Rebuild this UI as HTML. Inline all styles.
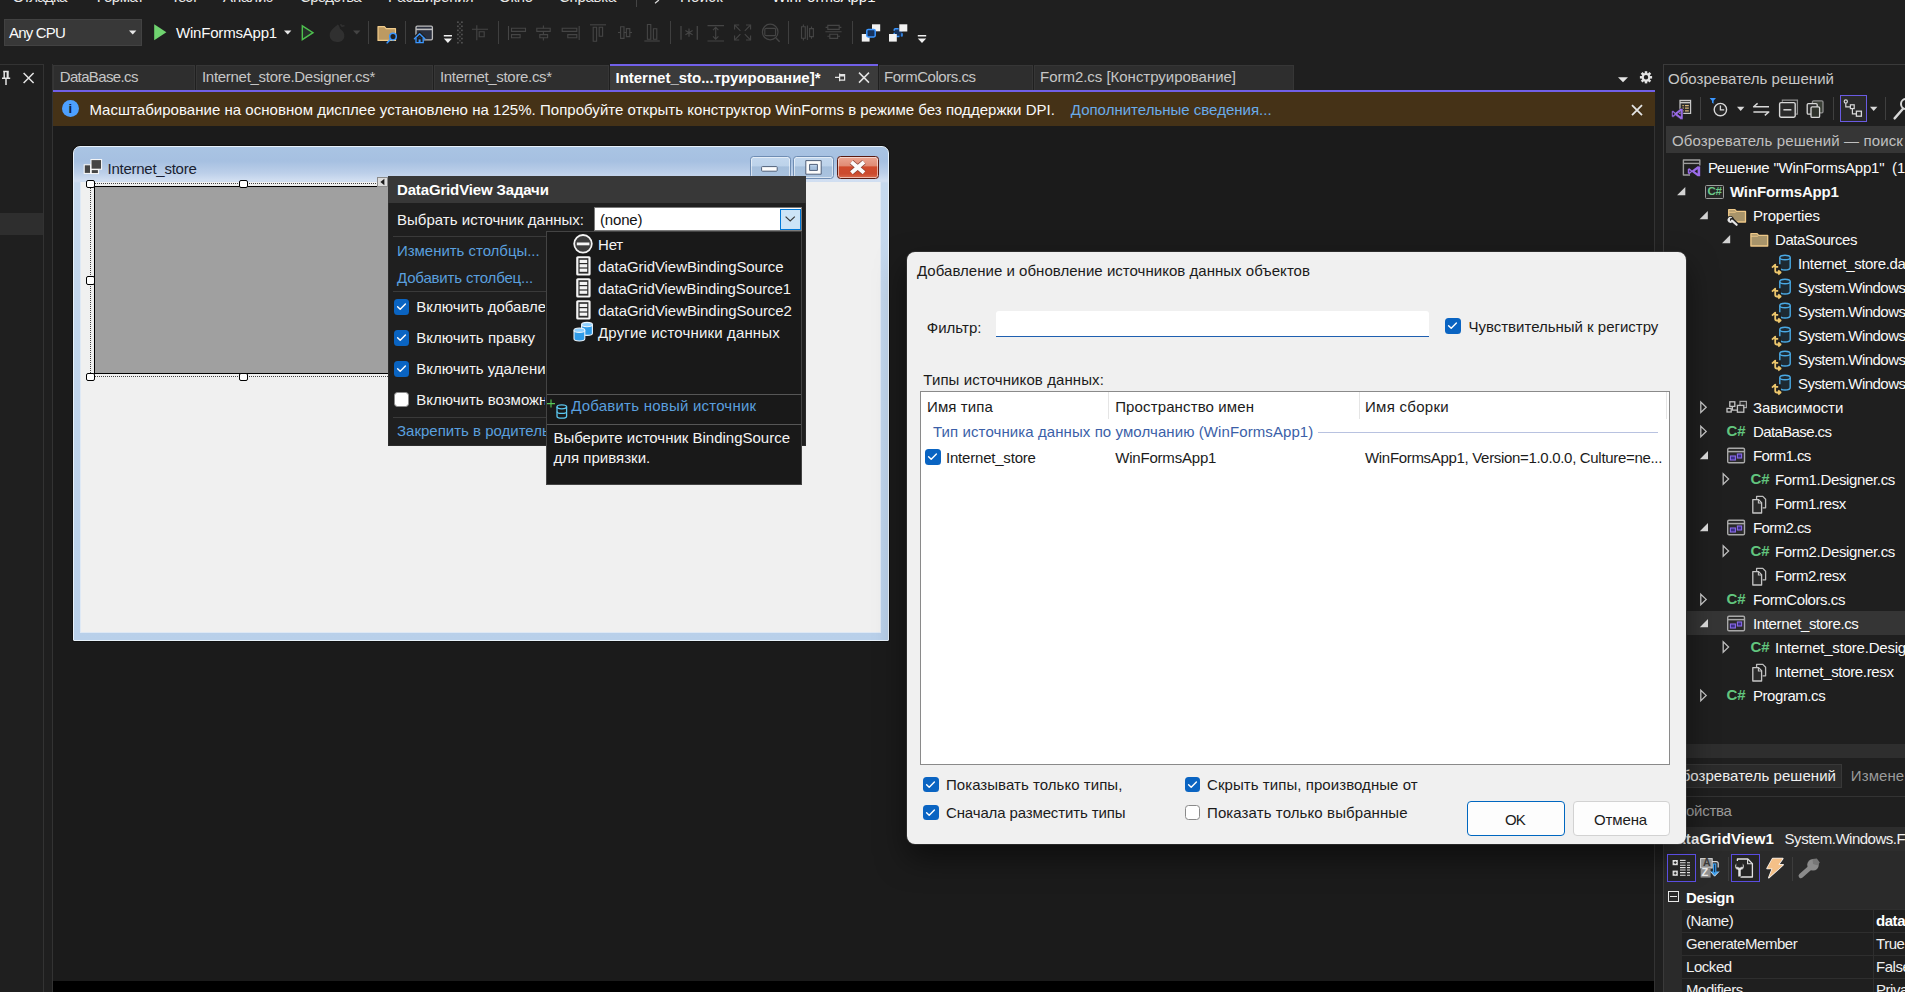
<!DOCTYPE html>
<html lang="ru"><head><meta charset="utf-8"><title>WinFormsApp1</title>
<style>
html,body{margin:0;padding:0;}
body{width:1905px;height:992px;overflow:hidden;background:#1f1f1f;position:relative;font-family:"Liberation Sans", sans-serif;font-size:15px;}
.a{position:absolute;box-sizing:border-box;}
.t{white-space:nowrap;}
svg{overflow:visible;}
</style></head>
<body>
<div class="a t" id="t1" style="left:12.6px;top:-13.2px;font-size:15px;color:#e8e8e8;line-height:20.0px;letter-spacing:-0.742px;"><span>Отладка</span></div>
<div class="a t" id="t2" style="left:93px;top:-13.2px;font-size:15px;color:#e8e8e8;line-height:20.0px;letter-spacing:-0.449px;"><span>Формат</span></div>
<div class="a t" id="t3" style="left:171px;top:-13.2px;font-size:15px;color:#e8e8e8;line-height:20.0px;letter-spacing:-1.200px;"><span>Тест</span></div>
<div class="a t" id="t4" style="left:223px;top:-13.2px;font-size:15px;color:#e8e8e8;line-height:20.0px;letter-spacing:-0.107px;"><span>Анализ</span></div>
<div class="a t" id="t5" style="left:300px;top:-13.2px;font-size:15px;color:#e8e8e8;line-height:20.0px;letter-spacing:-0.682px;"><span>Средства</span></div>
<div class="a t" id="t6" style="left:388px;top:-13.2px;font-size:15px;color:#e8e8e8;line-height:20.0px;letter-spacing:-0.173px;"><span>Расширения</span></div>
<div class="a t" id="t7" style="left:499px;top:-13.2px;font-size:15px;color:#e8e8e8;line-height:20.0px;letter-spacing:-0.215px;"><span>Окно</span></div>
<div class="a t" id="t8" style="left:559px;top:-13.2px;font-size:15px;color:#e8e8e8;line-height:20.0px;letter-spacing:-0.263px;"><span>Справка</span></div>
<div class="a t" id="t9" style="left:680px;top:-13.2px;font-size:15px;color:#e8e8e8;line-height:20.0px;letter-spacing:0.284px;"><span>Поиск</span></div>
<div class="a t" id="t10" style="left:772px;top:-13.2px;font-size:15px;color:#f4f4f4;line-height:20.0px;letter-spacing:0.012px;"><span>WinFormsApp1</span></div>
<svg class="a" style="left:0px;top:0px;" width="1" height="1" viewBox="0 0 1 1"><path d="M655 -2l3.4 2.6-3.4 2.6" fill="none" stroke="#ddd" stroke-width="1.2"/></svg>
<div class="a " style="left:636px;top:-5px;width:1px;height:12px;background:#444;"></div>
<div class="a " style="left:4px;top:19px;width:138px;height:27px;background:#383838;border:1px solid #424242;"></div>
<div class="a t" id="t11" style="left:9px;top:22.6px;font-size:15px;color:#fafafa;line-height:20.0px;letter-spacing:-0.812px;"><span>Any CPU</span></div>
<div class="a t" id="t12" style="left:176px;top:22.6px;font-size:15px;color:#fafafa;line-height:20.0px;letter-spacing:-0.197px;"><span>WinFormsApp1</span></div>
<div class="a " style="left:0px;top:64px;width:44px;height:928px;background:#1f1f1f;border-top:1px solid #333;border-right:1px solid #333;"></div>
<div class="a " style="left:0px;top:213px;width:43px;height:22px;background:#2e2e2e;"></div>
<div class="a " style="left:52.3px;top:64px;width:1px;height:928px;background:#333;"></div>
<div class="a " style="left:53px;top:92px;width:1602px;height:900px;background:#1b1b1b;"></div>
<div class="a " style="left:53px;top:65px;width:142px;height:25px;background:#2e2e2e;border:1px solid #363636;border-bottom:none;"></div>
<div class="a t" id="t13" style="left:59.7px;top:67.1px;font-size:15px;color:#c6c6c6;line-height:20.0px;letter-spacing:-0.632px;"><span>DataBase.cs</span></div>
<div class="a " style="left:196px;top:65px;width:237px;height:25px;background:#2e2e2e;border:1px solid #363636;border-bottom:none;"></div>
<div class="a t" id="t14" style="left:202px;top:67.1px;font-size:15px;color:#c6c6c6;line-height:20.0px;letter-spacing:-0.294px;"><span>Internet_store.Designer.cs*</span></div>
<div class="a " style="left:434px;top:65px;width:175px;height:25px;background:#2e2e2e;border:1px solid #363636;border-bottom:none;"></div>
<div class="a t" id="t15" style="left:440px;top:67.1px;font-size:15px;color:#c6c6c6;line-height:20.0px;letter-spacing:-0.320px;"><span>Internet_store.cs*</span></div>
<div class="a " style="left:610px;top:64px;width:268px;height:26px;background:#3b3b3b;border-top:2px solid #7160e8;"></div>
<div class="a t" id="t16" style="left:615.5px;top:67.6px;font-size:15px;color:#ffffff;line-height:20.0px;font-weight:700;letter-spacing:-0.013px;"><span>Internet_sto...труирование]*</span></div>
<div class="a " style="left:879px;top:65px;width:154px;height:25px;background:#2e2e2e;border:1px solid #363636;border-bottom:none;"></div>
<div class="a t" id="t17" style="left:884px;top:67.1px;font-size:15px;color:#c6c6c6;line-height:20.0px;letter-spacing:-0.455px;"><span>FormColors.cs</span></div>
<div class="a " style="left:1034px;top:65px;width:260px;height:25px;background:#2e2e2e;border:1px solid #363636;border-bottom:none;"></div>
<div class="a t" id="t18" style="left:1040px;top:67.1px;font-size:15px;color:#c6c6c6;line-height:20.0px;letter-spacing:-0.025px;"><span>Form2.cs [Конструирование]</span></div>
<div class="a " style="left:53px;top:89.5px;width:1602px;height:2.5px;background:#7160e8;"></div>
<div class="a " style="left:53px;top:92px;width:1602px;height:34px;background:#453217;"></div>
<div class="a " style="left:62px;top:100px;width:17px;height:17px;background:#4da0ff;border-radius:50%;"></div>
<div class="a t" id="t19" style="left:68.6px;top:99.8px;font-size:13px;color:#10233f;line-height:17.3px;font-weight:700;"><span>i</span></div>
<div class="a t" id="t20" style="left:89.4px;top:100.1px;font-size:15px;color:#fafafa;line-height:20.0px;letter-spacing:0.032px;"><span>Масштабирование на основном дисплее установлено на 125%. Попробуйте открыть конструктор WinForms в режиме без поддержки DPI.</span></div>
<div class="a t" id="t21" style="left:1070.8px;top:100.1px;font-size:15px;color:#6aacea;line-height:20.0px;letter-spacing:0.007px;"><span>Дополнительные сведения...</span></div>
<div class="a " style="left:53px;top:981px;width:1602px;height:11px;background:#000;"></div>
<div class="a " style="left:73px;top:146px;width:816px;height:495px;border-radius:7px 7px 1px 1px;background:linear-gradient(#a9c4e3 0,#a6c0e1 14px,#bccfe9 26px,#d3e0f2 34px,#c6d9ee 36px,#b9d0ea 100%);border:1px solid #e8f2fb;box-shadow:0 0 0 1px rgba(0,0,0,.35);"></div>
<div class="a " style="left:80.3px;top:182px;width:800.7px;height:451px;background:#f0f0f0;border:1px solid #dfe9f5;border-top:none;"></div>
<div class="a t" id="t22" style="left:107.5px;top:159.1px;font-size:15px;color:#1a1f33;line-height:20.0px;letter-spacing:-0.254px;"><span>Internet_store</span></div>
<div class="a " style="left:93.5px;top:186px;width:300px;height:187.5px;background:#a0a0a0;border:1px solid #000;"></div>
<div class="a " style="left:90px;top:183px;width:300px;height:194px;border:1px dotted #444;"></div>
<div class="a " style="left:86.2px;top:179.7px;width:8.6px;height:8.6px;background:#fff;border:1px solid #000;border-radius:2px;"></div>
<div class="a " style="left:239.0px;top:179.7px;width:8.6px;height:8.6px;background:#fff;border:1px solid #000;border-radius:2px;"></div>
<div class="a " style="left:86.2px;top:276.4px;width:8.6px;height:8.6px;background:#fff;border:1px solid #000;border-radius:2px;"></div>
<div class="a " style="left:86.2px;top:372.5px;width:8.6px;height:8.6px;background:#fff;border:1px solid #000;border-radius:2px;"></div>
<div class="a " style="left:239.0px;top:372.5px;width:8.6px;height:8.6px;background:#fff;border:1px solid #000;border-radius:2px;"></div>
<svg class="a" style="left:0px;top:0px;" width="1" height="1" viewBox="0 0 1 1"><rect x="91" y="159.6" width="10.6" height="9.6" fill="#454545" stroke="#fff" stroke-width="1"/><rect x="84.2" y="164.8" width="6.4" height="8.6" fill="#454545" stroke="#fff" stroke-width="1"/><rect x="91.2" y="169.6" width="7.2" height="4" fill="#454545" stroke="#fff" stroke-width="1"/></svg>
<div class="a " style="left:749.6px;top:156.4px;width:41px;height:23px;background:linear-gradient(#c3d8ee 0,#bcd2ea 44%,#a5bfdc 46%,#aac3df 100%);border:1px solid #6f8db3;border-radius:3.5px;box-shadow:inset 0 0 0 1px rgba(255,255,255,.55);"></div>
<div class="a " style="left:793.4px;top:156.4px;width:41px;height:23px;background:linear-gradient(#c3d8ee 0,#bcd2ea 44%,#a5bfdc 46%,#aac3df 100%);border:1px solid #6f8db3;border-radius:3.5px;box-shadow:inset 0 0 0 1px rgba(255,255,255,.55);"></div>
<div class="a " style="left:837.4px;top:156.4px;width:41.4px;height:23px;background:linear-gradient(#eba693 0,#e08a73 44%,#d04a2c 46%,#cc4a2e 80%,#d86a4c 100%);border:1px solid #5a1a10;border-radius:3.5px;box-shadow:inset 0 0 0 1px rgba(255,255,255,.55);"></div>
<svg class="a" style="left:0px;top:0px;" width="1" height="1" viewBox="0 0 1 1"><rect x="761.6" y="166.6" width="15.6" height="4.6" rx="0.8" fill="#fdfdfd" stroke="#50607a" stroke-width="1"/></svg>
<svg class="a" style="left:0px;top:0px;" width="1" height="1" viewBox="0 0 1 1"><path d="M805.8 160.6h15.4v13.6h-15.4zM809.6 164.4v6h7.8v-6z" fill="#fbfbfb" fill-rule="evenodd" stroke="#50607a" stroke-width="1"/></svg>
<svg class="a" style="left:0px;top:0px;" width="1" height="1" viewBox="0 0 1 1"><path d="M851.4 162l12.6 10.8M864 162l-12.6 10.8" stroke="#8a4034" stroke-width="5.4" stroke-linecap="butt"/><path d="M851.4 162l12.6 10.8M864 162l-12.6 10.8" stroke="#fbfbfb" stroke-width="3.9" stroke-linecap="butt"/></svg>
<div class="a " style="left:388px;top:176px;width:417.5px;height:270px;background:#1f1f1f;border:1px solid #2c2c2c;"></div>
<div class="a " style="left:388px;top:176px;width:417.5px;height:26.5px;background:#383838;"></div>
<div class="a t" id="t23" style="left:397px;top:179.8px;font-size:15px;color:#fff;line-height:20.0px;font-weight:700;letter-spacing:-0.152px;"><span>DataGridView Задачи</span></div>
<div class="a t" id="t24" style="left:397px;top:209.9px;font-size:15px;color:#f4f4f4;line-height:20.0px;letter-spacing:0.021px;"><span>Выбрать источник данных:</span></div>
<div class="a " style="left:594px;top:207px;width:208px;height:24px;background:#fff;border:1px solid #7a7a7a;"></div>
<div class="a t" id="t25" style="left:600px;top:209.6px;font-size:15px;color:#111;line-height:20.0px;letter-spacing:-0.177px;"><span>(none)</span></div>
<div class="a " style="left:780px;top:208.5px;width:20.5px;height:21px;background:#cce4f7;border:1px solid #0078d7;"></div>
<div class="a " style="left:392.5px;top:236px;width:409px;height:1px;background:#3a3a3a;"></div>
<div class="a t" id="t26" style="left:397px;top:240.8px;font-size:15px;color:#5a9fde;line-height:20.0px;letter-spacing:-0.035px;"><span>Изменить столбцы...</span></div>
<div class="a t" id="t27" style="left:397px;top:268.0px;font-size:15px;color:#5a9fde;line-height:20.0px;letter-spacing:-0.174px;"><span>Добавить столбец...</span></div>
<div class="a " style="left:392.5px;top:290.5px;width:409px;height:1px;background:#3a3a3a;"></div>
<div class="a " style="left:393.6px;top:299.29999999999995px;width:15.5px;height:15.5px;background:#0a64c2;border-radius:3.5px;"><svg width="15" height="15" viewBox="0 0 15 15" style="position:absolute;left:0;top:0"><path d="M3.6 7.7l2.6 2.6 5.2-5.4" fill="none" stroke="#fff" stroke-width="1.4" stroke-linecap="round" stroke-linejoin="round"/></svg></div>
<div class="a t" id="t28" style="left:416.3px;top:297.0px;font-size:15px;color:#f4f4f4;line-height:20.0px;width:129.2px;overflow:hidden;"><span>Включить добавление</span></div>
<div class="a " style="left:393.6px;top:330.09999999999997px;width:15.5px;height:15.5px;background:#0a64c2;border-radius:3.5px;"><svg width="15" height="15" viewBox="0 0 15 15" style="position:absolute;left:0;top:0"><path d="M3.6 7.7l2.6 2.6 5.2-5.4" fill="none" stroke="#fff" stroke-width="1.4" stroke-linecap="round" stroke-linejoin="round"/></svg></div>
<div class="a t" id="t29" style="left:416.3px;top:327.8px;font-size:15px;color:#f4f4f4;line-height:20.0px;width:129.2px;overflow:hidden;letter-spacing:0.015px;"><span>Включить правку</span></div>
<div class="a " style="left:393.6px;top:361.0px;width:15.5px;height:15.5px;background:#0a64c2;border-radius:3.5px;"><svg width="15" height="15" viewBox="0 0 15 15" style="position:absolute;left:0;top:0"><path d="M3.6 7.7l2.6 2.6 5.2-5.4" fill="none" stroke="#fff" stroke-width="1.4" stroke-linecap="round" stroke-linejoin="round"/></svg></div>
<div class="a t" id="t30" style="left:416.3px;top:358.7px;font-size:15px;color:#f4f4f4;line-height:20.0px;width:129.2px;overflow:hidden;"><span>Включить удаление</span></div>
<div class="a " style="left:393.6px;top:391.79999999999995px;width:15.5px;height:15.5px;background:#fff;border-radius:3.5px;border:1px solid #8a8a8a;"></div>
<div class="a t" id="t31" style="left:416.3px;top:389.5px;font-size:15px;color:#f4f4f4;line-height:20.0px;width:129.2px;overflow:hidden;"><span>Включить возможность</span></div>
<div class="a " style="left:392.5px;top:416.5px;width:409px;height:1px;background:#3a3a3a;"></div>
<div class="a t" id="t32" style="left:397px;top:421.1px;font-size:15px;color:#5a9fde;line-height:20.0px;width:148.5px;overflow:hidden;"><span>Закрепить в родительском контейнере</span></div>
<div class="a " style="left:545.5px;top:230.5px;width:256.5px;height:254px;background:#191919;border:1px solid #444;"></div>
<div class="a t" id="t33" style="left:598px;top:234.6px;font-size:15px;color:#f4f4f4;line-height:20.0px;letter-spacing:-0.182px;"><span>Нет</span></div>
<div class="a t" id="t34" style="left:598px;top:256.7px;font-size:15px;color:#f4f4f4;line-height:20.0px;letter-spacing:-0.074px;"><span>dataGridViewBindingSource</span></div>
<div class="a t" id="t35" style="left:598px;top:278.9px;font-size:15px;color:#f4f4f4;line-height:20.0px;letter-spacing:-0.103px;"><span>dataGridViewBindingSource1</span></div>
<div class="a t" id="t36" style="left:598px;top:300.6px;font-size:15px;color:#f4f4f4;line-height:20.0px;letter-spacing:-0.073px;"><span>dataGridViewBindingSource2</span></div>
<div class="a t" id="t37" style="left:598px;top:323.1px;font-size:15px;color:#f4f4f4;line-height:20.0px;letter-spacing:0.155px;"><span>Другие источники данных</span></div>
<div class="a " style="left:546.5px;top:394px;width:254.5px;height:1px;background:#565656;"></div>
<div class="a t" id="t38" style="left:571.2px;top:396.1px;font-size:15px;color:#5a9fde;line-height:20.0px;letter-spacing:0.221px;"><span>Добавить новый источник</span></div>
<div class="a " style="left:546.5px;top:424px;width:254.5px;height:1px;background:#565656;"></div>
<div class="a t" id="t39" style="left:553.4px;top:428.4px;font-size:15px;color:#f4f4f4;line-height:20.0px;letter-spacing:-0.008px;"><span>Выберите источник BindingSource</span></div>
<div class="a t" id="t40" style="left:553.4px;top:447.8px;font-size:15px;color:#f4f4f4;line-height:20.0px;letter-spacing:0.026px;"><span>для привязки.</span></div>
<div class="a " style="left:1654px;top:126px;width:1px;height:866px;background:#333;"></div>
<div class="a " style="left:1662.5px;top:64px;width:243px;height:928px;background:#1f1f1f;border-left:1px solid #3a3a3a;border-top:1px solid #3a3a3a;"></div>
<div class="a t" id="t41" style="left:1668px;top:69.1px;font-size:15px;color:#c8c8c8;line-height:20.0px;letter-spacing:0.040px;"><span>Обозреватель решений</span></div>
<div class="a " style="left:1666.3px;top:126.3px;width:240px;height:26.4px;background:#363636;"></div>
<div class="a t" id="t42" style="left:1672px;top:130.6px;font-size:15px;color:#c0c0c0;line-height:20.0px;letter-spacing:0.127px;"><span>Обозреватель решений — поиск</span></div>
<div class="a " style="left:1686.5px;top:611px;width:219px;height:24px;background:#353535;"></div>
<div class="a t" id="t43" style="left:1708px;top:157.6px;font-size:15px;color:#fafafa;line-height:20.0px;letter-spacing:-0.228px;"><span>Решение &quot;WinFormsApp1&quot;  (1</span></div>
<div class="a t" id="t44" style="left:1730px;top:181.6px;font-size:15px;color:#fafafa;line-height:20.0px;font-weight:700;letter-spacing:-0.159px;"><span>WinFormsApp1</span></div>
<div class="a t" id="t45" style="left:1753px;top:205.6px;font-size:15px;color:#fafafa;line-height:20.0px;letter-spacing:-0.158px;"><span>Properties</span></div>
<div class="a t" id="t46" style="left:1775px;top:229.6px;font-size:15px;color:#fafafa;line-height:20.0px;letter-spacing:-0.429px;"><span>DataSources</span></div>
<div class="a t" id="t47" style="left:1798px;top:253.6px;font-size:15px;color:#fafafa;line-height:20.0px;letter-spacing:-0.342px;"><span><span class="m">Internet_store.da</span>tasource</span></div>
<div class="a t" id="t48" style="left:1798px;top:277.6px;font-size:15px;color:#fafafa;line-height:20.0px;letter-spacing:-0.545px;"><span><span class="m">System.Windows</span>.Forms</span></div>
<div class="a t" id="t49" style="left:1798px;top:301.6px;font-size:15px;color:#fafafa;line-height:20.0px;letter-spacing:-0.545px;"><span><span class="m">System.Windows</span>.Forms</span></div>
<div class="a t" id="t50" style="left:1798px;top:325.6px;font-size:15px;color:#fafafa;line-height:20.0px;letter-spacing:-0.545px;"><span><span class="m">System.Windows</span>.Forms</span></div>
<div class="a t" id="t51" style="left:1798px;top:349.6px;font-size:15px;color:#fafafa;line-height:20.0px;letter-spacing:-0.545px;"><span><span class="m">System.Windows</span>.Forms</span></div>
<div class="a t" id="t52" style="left:1798px;top:373.6px;font-size:15px;color:#fafafa;line-height:20.0px;letter-spacing:-0.545px;"><span><span class="m">System.Windows</span>.Forms</span></div>
<div class="a t" id="t53" style="left:1753px;top:397.6px;font-size:15px;color:#fafafa;line-height:20.0px;letter-spacing:-0.077px;"><span>Зависимости</span></div>
<div class="a t" id="t54" style="left:1753px;top:421.6px;font-size:15px;color:#fafafa;line-height:20.0px;letter-spacing:-0.613px;"><span>DataBase.cs</span></div>
<div class="a t" id="t55" style="left:1753px;top:445.6px;font-size:15px;color:#fafafa;line-height:20.0px;letter-spacing:-0.602px;"><span>Form1.cs</span></div>
<div class="a t" id="t56" style="left:1775px;top:469.6px;font-size:15px;color:#fafafa;line-height:20.0px;letter-spacing:-0.346px;"><span>Form1.Designer.cs</span></div>
<div class="a t" id="t57" style="left:1775px;top:493.6px;font-size:15px;color:#fafafa;line-height:20.0px;letter-spacing:-0.524px;"><span>Form1.resx</span></div>
<div class="a t" id="t58" style="left:1753px;top:517.6px;font-size:15px;color:#fafafa;line-height:20.0px;letter-spacing:-0.602px;"><span>Form2.cs</span></div>
<div class="a t" id="t59" style="left:1775px;top:541.6px;font-size:15px;color:#fafafa;line-height:20.0px;letter-spacing:-0.346px;"><span>Form2.Designer.cs</span></div>
<div class="a t" id="t60" style="left:1775px;top:565.6px;font-size:15px;color:#fafafa;line-height:20.0px;letter-spacing:-0.524px;"><span>Form2.resx</span></div>
<div class="a t" id="t61" style="left:1753px;top:589.6px;font-size:15px;color:#fafafa;line-height:20.0px;letter-spacing:-0.424px;"><span>FormColors.cs</span></div>
<div class="a t" id="t62" style="left:1753px;top:613.6px;font-size:15px;color:#fafafa;line-height:20.0px;letter-spacing:-0.367px;"><span>Internet_store.cs</span></div>
<div class="a t" id="t63" style="left:1775px;top:637.6px;font-size:15px;color:#fafafa;line-height:20.0px;letter-spacing:-0.204px;"><span><span class="m">Internet_store.Desig</span>ner.cs</span></div>
<div class="a t" id="t64" style="left:1775px;top:661.6px;font-size:15px;color:#fafafa;line-height:20.0px;letter-spacing:-0.335px;"><span>Internet_store.resx</span></div>
<div class="a t" id="t65" style="left:1753px;top:685.6px;font-size:15px;color:#fafafa;line-height:20.0px;letter-spacing:-0.449px;"><span>Program.cs</span></div>
<div class="a " style="left:1663.5px;top:744px;width:242px;height:13.5px;background:#2e2e2e;"></div>
<div class="a " style="left:1663.5px;top:763.5px;width:178px;height:24px;background:#2b2b2b;border:1px solid #383838;"></div>
<div class="a t" id="t66" style="left:1670px;top:766.1px;font-size:15px;color:#f0f0f0;line-height:20.0px;letter-spacing:0.040px;"><span>Обозреватель решений</span></div>
<div class="a t" id="t67" style="left:1850.8px;top:766.1px;font-size:15px;color:#9a9a9a;line-height:20.0px;letter-spacing:0.091px;"><span><span class="m">Измене</span>ния</span></div>
<div class="a " style="left:1663.5px;top:795.5px;width:242px;height:1px;background:#333;"></div>
<div class="a t" id="t68" style="left:1668px;top:801.4px;font-size:15px;color:#9a9a9a;line-height:20.0px;letter-spacing:-0.284px;"><span>Свойства</span></div>
<div class="a " style="left:1663.5px;top:826.5px;width:242px;height:166px;background:#2a2a2a;"></div>
<div class="a " style="left:1663.5px;top:826.5px;width:242px;height:24.5px;background:#2d2d2d;"></div>
<div class="a t" id="t69" style="left:1668px;top:829.1px;font-size:15px;color:#fff;line-height:20.0px;font-weight:700;letter-spacing:0.159px;"><span>dataGridView1</span></div>
<div class="a t" id="t70" style="left:1784.6px;top:829.1px;font-size:15px;color:#f0f0f0;line-height:20.0px;letter-spacing:-0.485px;"><span><span class="m">System.Windows.F</span>orms</span></div>
<div class="a t" id="t71" style="left:1686px;top:888.0px;font-size:15px;color:#fff;line-height:20.0px;font-weight:700;letter-spacing:-0.336px;"><span>Design</span></div>
<div class="a " style="left:1682px;top:909.3px;width:191.5px;height:23px;background:#1f1f1f;border:1px solid #2e2e2e;border-width:1px 1px 0 0;"></div>
<div class="a " style="left:1873.5px;top:909.3px;width:40px;height:23px;background:#1f1f1f;border-top:1px solid #2e2e2e;"></div>
<div class="a t" id="t72" style="left:1686px;top:910.9px;font-size:15px;color:#f0f0f0;line-height:20.0px;letter-spacing:-0.45px;"><span>(Name)</span></div>
<div class="a t" id="t73" style="left:1876px;top:910.9px;font-size:15px;color:#fff;line-height:20.0px;font-weight:700;letter-spacing:-0.45px;"><span>dataGridView1</span></div>
<div class="a " style="left:1682px;top:932.3px;width:191.5px;height:23px;background:#1f1f1f;border:1px solid #2e2e2e;border-width:1px 1px 0 0;"></div>
<div class="a " style="left:1873.5px;top:932.3px;width:40px;height:23px;background:#1f1f1f;border-top:1px solid #2e2e2e;"></div>
<div class="a t" id="t74" style="left:1686px;top:933.9px;font-size:15px;color:#f0f0f0;line-height:20.0px;letter-spacing:-0.45px;"><span>GenerateMember</span></div>
<div class="a t" id="t75" style="left:1876px;top:933.9px;font-size:15px;color:#f0f0f0;line-height:20.0px;letter-spacing:-0.45px;"><span>True</span></div>
<div class="a " style="left:1682px;top:955.0px;width:191.5px;height:23px;background:#1f1f1f;border:1px solid #2e2e2e;border-width:1px 1px 0 0;"></div>
<div class="a " style="left:1873.5px;top:955.0px;width:40px;height:23px;background:#1f1f1f;border-top:1px solid #2e2e2e;"></div>
<div class="a t" id="t76" style="left:1686px;top:956.6px;font-size:15px;color:#f0f0f0;line-height:20.0px;letter-spacing:-0.45px;"><span>Locked</span></div>
<div class="a t" id="t77" style="left:1876px;top:956.6px;font-size:15px;color:#f0f0f0;line-height:20.0px;letter-spacing:-0.45px;"><span>False</span></div>
<div class="a " style="left:1682px;top:978.0px;width:191.5px;height:23px;background:#1f1f1f;border:1px solid #2e2e2e;border-width:1px 1px 0 0;"></div>
<div class="a " style="left:1873.5px;top:978.0px;width:40px;height:23px;background:#1f1f1f;border-top:1px solid #2e2e2e;"></div>
<div class="a t" id="t78" style="left:1686px;top:979.6px;font-size:15px;color:#f0f0f0;line-height:20.0px;letter-spacing:-0.45px;"><span>Modifiers</span></div>
<div class="a t" id="t79" style="left:1876px;top:979.6px;font-size:15px;color:#f0f0f0;line-height:20.0px;letter-spacing:-0.45px;"><span>Private</span></div>
<div class="a " style="left:907px;top:252px;width:778.8px;height:591.5px;background:#f0f0f0;border-radius:8px;box-shadow:0 0 0 1px rgba(70,70,70,.45),0 14px 30px rgba(0,0,0,.5);"></div>
<div class="a t" id="t80" style="left:917px;top:260.9px;font-size:15px;color:#1b1b1b;line-height:20.0px;letter-spacing:0.031px;"><span>Добавление и обновление источников данных объектов</span></div>
<div class="a t" id="t81" style="left:926.7px;top:317.6px;font-size:15px;color:#1b1b1b;line-height:20.0px;letter-spacing:0.048px;"><span>Фильтр:</span></div>
<div class="a " style="left:995.5px;top:311px;width:433.5px;height:25.5px;background:#fff;border-radius:3px 3px 0 0;border-bottom:1.6px solid #1f5fb0;"></div>
<div class="a " style="left:1445.3px;top:318.3px;width:15.5px;height:15.5px;background:#0a64c2;border-radius:3.5px;"><svg width="15" height="15" viewBox="0 0 15 15" style="position:absolute;left:0;top:0"><path d="M3.6 7.7l2.6 2.6 5.2-5.4" fill="none" stroke="#fff" stroke-width="1.4" stroke-linecap="round" stroke-linejoin="round"/></svg></div>
<div class="a t" id="t82" style="left:1468.5px;top:317.1px;font-size:15px;color:#1b1b1b;line-height:20.0px;letter-spacing:-0.010px;"><span>Чувствительный к регистру</span></div>
<div class="a t" id="t83" style="left:923.3px;top:369.6px;font-size:15px;color:#1b1b1b;line-height:20.0px;letter-spacing:0.102px;"><span>Типы источников данных:</span></div>
<div class="a " style="left:919.5px;top:391px;width:750.5px;height:374px;background:#fff;border:1px solid #8a8a8a;"></div>
<div class="a t" id="t84" style="left:927px;top:397.1px;font-size:15px;color:#1b1b1b;line-height:20.0px;letter-spacing:0.111px;"><span>Имя типа</span></div>
<div class="a t" id="t85" style="left:1115.2px;top:397.1px;font-size:15px;color:#1b1b1b;line-height:20.0px;letter-spacing:0.129px;"><span>Пространство имен</span></div>
<div class="a t" id="t86" style="left:1365px;top:397.1px;font-size:15px;color:#1b1b1b;line-height:20.0px;letter-spacing:0.289px;"><span>Имя сборки</span></div>
<div class="a " style="left:1108.4px;top:392px;width:1px;height:27px;background:#e5e5e5;"></div>
<div class="a " style="left:1358.6px;top:392px;width:1px;height:27px;background:#e5e5e5;"></div>
<div class="a " style="left:1666.3px;top:392px;width:1px;height:27px;background:#e5e5e5;"></div>
<div class="a t" id="t87" style="left:933px;top:422.0px;font-size:15px;color:#3b5fa8;line-height:20.0px;letter-spacing:0.090px;"><span>Тип источника данных по умолчанию (WinFormsApp1)</span></div>
<div class="a " style="left:1318px;top:431.5px;width:340px;height:1px;background:#b8c2e0;"></div>
<div class="a " style="left:925.1px;top:449.4px;width:15.5px;height:15.5px;background:#0a64c2;border-radius:3.5px;"><svg width="15" height="15" viewBox="0 0 15 15" style="position:absolute;left:0;top:0"><path d="M3.6 7.7l2.6 2.6 5.2-5.4" fill="none" stroke="#fff" stroke-width="1.4" stroke-linecap="round" stroke-linejoin="round"/></svg></div>
<div class="a t" id="t88" style="left:946px;top:447.8px;font-size:15px;color:#1b1b1b;line-height:20.0px;letter-spacing:-0.204px;"><span>Internet_store</span></div>
<div class="a t" id="t89" style="left:1115.2px;top:447.8px;font-size:15px;color:#1b1b1b;line-height:20.0px;letter-spacing:-0.197px;"><span>WinFormsApp1</span></div>
<div class="a t" id="t90" style="left:1365px;top:447.8px;font-size:15px;color:#1b1b1b;line-height:20.0px;letter-spacing:-0.318px;"><span>WinFormsApp1, Version=1.0.0.0, Culture=ne...</span></div>
<div class="a " style="left:923.3px;top:776.8px;width:15.5px;height:15.5px;background:#0a64c2;border-radius:3.5px;"><svg width="15" height="15" viewBox="0 0 15 15" style="position:absolute;left:0;top:0"><path d="M3.6 7.7l2.6 2.6 5.2-5.4" fill="none" stroke="#fff" stroke-width="1.4" stroke-linecap="round" stroke-linejoin="round"/></svg></div>
<div class="a t" id="t91" style="left:946px;top:774.5px;font-size:15px;color:#1b1b1b;line-height:20.0px;letter-spacing:0.045px;"><span>Показывать только типы,</span></div>
<div class="a " style="left:923.3px;top:804.9px;width:15.5px;height:15.5px;background:#0a64c2;border-radius:3.5px;"><svg width="15" height="15" viewBox="0 0 15 15" style="position:absolute;left:0;top:0"><path d="M3.6 7.7l2.6 2.6 5.2-5.4" fill="none" stroke="#fff" stroke-width="1.4" stroke-linecap="round" stroke-linejoin="round"/></svg></div>
<div class="a t" id="t92" style="left:946px;top:802.8px;font-size:15px;color:#1b1b1b;line-height:20.0px;letter-spacing:-0.133px;"><span>Сначала разместить типы</span></div>
<div class="a " style="left:1184.5px;top:776.8px;width:15.5px;height:15.5px;background:#0a64c2;border-radius:3.5px;"><svg width="15" height="15" viewBox="0 0 15 15" style="position:absolute;left:0;top:0"><path d="M3.6 7.7l2.6 2.6 5.2-5.4" fill="none" stroke="#fff" stroke-width="1.4" stroke-linecap="round" stroke-linejoin="round"/></svg></div>
<div class="a t" id="t93" style="left:1207px;top:774.5px;font-size:15px;color:#1b1b1b;line-height:20.0px;letter-spacing:0.068px;"><span>Скрыть типы, производные от</span></div>
<div class="a " style="left:1184.5px;top:804.9px;width:15.5px;height:15.5px;background:#fff;border-radius:3.5px;border:1px solid #8a8a8a;"></div>
<div class="a t" id="t94" style="left:1207px;top:802.8px;font-size:15px;color:#1b1b1b;line-height:20.0px;letter-spacing:0.101px;"><span>Показать только выбранные</span></div>
<div class="a " style="left:1467.3px;top:801.3px;width:97.6px;height:35.2px;background:#fdfdfd;border:1px solid #0067c0;border-radius:4px;"></div>
<div class="a t" id="t95" style="left:1505px;top:809.6px;font-size:15px;color:#1b1b1b;line-height:20.0px;letter-spacing:-0.844px;"><span>OK</span></div>
<div class="a " style="left:1572.5px;top:801.3px;width:97.2px;height:35.2px;background:#fdfdfd;border:1px solid #d2d2d2;border-radius:4px;"></div>
<div class="a t" id="t96" style="left:1594px;top:809.6px;font-size:15px;color:#1b1b1b;line-height:20.0px;letter-spacing:-0.138px;"><span>Отмена</span></div>
<div class="a " style="left:376.6px;top:176.8px;width:11px;height:10.4px;background:#dcdcdc;border:1px solid #8a8a8a;"></div>
<svg class="a" style="left:0px;top:0px;" width="1" height="1" viewBox="0 0 1 1"><path d="M384.4 178.8v6.4l-4-3.2z" fill="#1a1a1a"/></svg>
<svg class="a" style="left:0px;top:0px;" width="1" height="1" viewBox="0 0 1 1"><path d="M785.6 216.6l4.6 4.4 4.6-4.4" fill="none" stroke="#3a3a3a" stroke-width="1.2"/></svg>
<svg class="a" style="left:0px;top:0px;" width="1" height="1" viewBox="0 0 1 1"><circle cx="583" cy="243.8" r="8.8" fill="#3c3c3c" stroke="#f4f4f4" stroke-width="1.8"/><rect x="576.8" y="242.5" width="12.6" height="2.8" fill="#f4f4f4"/></svg>
<svg class="a" style="left:0px;top:0px;" width="1" height="1" viewBox="0 0 1 1"><rect x="576.2" y="256.2" width="14.4" height="19.4" rx="1.6" fill="#f4f4f4"/><rect x="578.4" y="258.2" width="10" height="15.4" fill="#2a2a2a"/><rect x="579.6" y="259.8" width="7.6" height="3.2" fill="#f4f4f4"/><rect x="579.6" y="264.2" width="7.6" height="3.2" fill="#f4f4f4"/><rect x="579.6" y="268.6" width="7.6" height="3.2" fill="#f4f4f4"/></svg>
<svg class="a" style="left:0px;top:0px;" width="1" height="1" viewBox="0 0 1 1"><rect x="576.2" y="278.2" width="14.4" height="19.4" rx="1.6" fill="#f4f4f4"/><rect x="578.4" y="280.2" width="10" height="15.4" fill="#2a2a2a"/><rect x="579.6" y="281.8" width="7.6" height="3.2" fill="#f4f4f4"/><rect x="579.6" y="286.2" width="7.6" height="3.2" fill="#f4f4f4"/><rect x="579.6" y="290.6" width="7.6" height="3.2" fill="#f4f4f4"/></svg>
<svg class="a" style="left:0px;top:0px;" width="1" height="1" viewBox="0 0 1 1"><rect x="576.2" y="300.2" width="14.4" height="19.4" rx="1.6" fill="#f4f4f4"/><rect x="578.4" y="302.2" width="10" height="15.4" fill="#2a2a2a"/><rect x="579.6" y="303.8" width="7.6" height="3.2" fill="#f4f4f4"/><rect x="579.6" y="308.2" width="7.6" height="3.2" fill="#f4f4f4"/><rect x="579.6" y="312.6" width="7.6" height="3.2" fill="#f4f4f4"/></svg>
<svg class="a" style="left:0px;top:0px;" width="1" height="1" viewBox="0 0 1 1"><path d="M581.6 324.59999999999997v8.6c0 1.4 2.16 2.2 5.4 2.2s5.4-.8 5.4-2.2v-8.6" fill="#2f9be8" stroke="#eaf4fc" stroke-width="1.1"/><ellipse cx="587.0" cy="324.59999999999997" rx="5.4" ry="2.2" fill="#8fd0ff" stroke="#eaf4fc" stroke-width="1.1"/><path d="M574 330.2v8.6c0 1.4 2.16 2.2 5.4 2.2s5.4-.8 5.4-2.2v-8.6" fill="#2f9be8" stroke="#eaf4fc" stroke-width="1.1"/><ellipse cx="579.4" cy="330.2" rx="5.4" ry="2.2" fill="#8fd0ff" stroke="#eaf4fc" stroke-width="1.1"/></svg>
<svg class="a" style="left:0px;top:0px;" width="1" height="1" viewBox="0 0 1 1"><path d="M547 403.6h8M551 399.6v8" stroke="#58c858" stroke-width="1.1"/><path d="M557 406.8v9.4c0 1.2 2.2 2 4.8 2s4.8-.8 4.8-2v-9.4" fill="none" stroke="#5cc8f0" stroke-width="1.3"/><ellipse cx="561.8" cy="406.8" rx="4.8" ry="2" fill="none" stroke="#5cc8f0" stroke-width="1.3"/><path d="M557 411.4c0 1.2 2.2 2 4.8 2s4.8-.8 4.8-2" fill="none" stroke="#5cc8f0" stroke-width="1.1"/></svg>
<svg class="a" style="left:0px;top:0px;" width="1" height="1" viewBox="0 0 1 1"><path d="M129 30.6H136.4L132.7 34.6Z" fill="#e8e8e8"/></svg>
<svg class="a" style="left:0px;top:0px;" width="1" height="1" viewBox="0 0 1 1"><path d="M154.2 24.3V40.2L166.4 32.2Z" fill="#6fd36f"/></svg>
<svg class="a" style="left:0px;top:0px;" width="1" height="1" viewBox="0 0 1 1"><path d="M284 30.6H291.4L287.7 34.6Z" fill="#e8e8e8"/></svg>
<svg class="a" style="left:0px;top:0px;" width="1" height="1" viewBox="0 0 1 1"><path d="M302.3 25.8V39.6L313 32.7Z" fill="#26302a" stroke="#4ec04e" stroke-width="1.4" stroke-linejoin="miter"/></svg>
<svg class="a" style="left:0px;top:0px;" width="1" height="1" viewBox="0 0 1 1"><path d="M337.5 24.5c2.5 1.2 1.5 3.6 3.4 5 2.6 1.9 3.8 4.2 3.4 7.2-.5 3.4-3.6 5.5-7.3 5.3-4-.2-7-2.6-7.3-6.3-.3-3.4 1.8-5.4 3.6-7.4 1.6-1.7 3.4-2.3 4.2-3.8z" fill="#303030"/><path d="M340.5 24.2l1.6 2.2 2.4-.8" fill="none" stroke="#303030" stroke-width="1.6"/></svg>
<svg class="a" style="left:0px;top:0px;" width="1" height="1" viewBox="0 0 1 1"><path d="M353 30.6H360.4L356.7 34.6Z" fill="#444"/></svg>
<div class="a " style="left:368.0px;top:20.5px;width:1px;height:23.0px;background:#3f3f3f;"></div>
<svg class="a" style="left:0px;top:0px;" width="1" height="1" viewBox="0 0 1 1"><path d="M378 26.6h6.4l1.8 2h9.3v11.8H378z" fill="#bd9a62" stroke="#f0cb8a" stroke-width="1.2" stroke-linejoin="round"/><circle cx="393" cy="36.6" r="3.3" fill="#1f1f1f" stroke="#3a96ff" stroke-width="1.5"/><path d="M390.6 39.2l-3.4 3.6" stroke="#3a96ff" stroke-width="1.6" stroke-linecap="round"/></svg>
<div class="a " style="left:404.8px;top:20.5px;width:1px;height:23.0px;background:#3f3f3f;"></div>
<svg class="a" style="left:0px;top:0px;" width="1" height="1" viewBox="0 0 1 1"><rect x="416" y="26.2" width="16.4" height="13.6" rx="1.2" fill="#2a2f3e" stroke="#bdbdbd" stroke-width="1.3"/><path d="M416 29.4h16.4" stroke="#bdbdbd" stroke-width="1.6"/><path d="M414.4 38.6l5.2-5 5.2 5" fill="none" stroke="#1f1f1f" stroke-width="3.6"/><path d="M416 38v4.6h7.2V38" fill="#1f1f1f" stroke="#3a96ff" stroke-width="1.3"/><path d="M414.4 38.8l5.2-5 5.2 5" fill="none" stroke="#3a96ff" stroke-width="1.4" stroke-linejoin="round" stroke-linecap="round"/><rect x="418.6" y="39.4" width="2" height="3" fill="#3a96ff"/></svg>
<svg class="a" style="left:0px;top:0px;" width="1" height="1" viewBox="0 0 1 1"><path d="M443.8 34.9H452V36.4H443.8Z M443.8 38.4H452L447.9 43Z" fill="#f0f0f0"/></svg>
<svg class="a" style="left:0px;top:0px;" width="1" height="1" viewBox="0 0 1 1"><rect x="457" y="21.4" width="1.8" height="1.6" fill="#505050"/><rect x="461" y="21.4" width="1.8" height="1.6" fill="#505050"/><rect x="459" y="23.45" width="1.8" height="1.6" fill="#444"/><rect x="457" y="25.5" width="1.8" height="1.6" fill="#505050"/><rect x="461" y="25.5" width="1.8" height="1.6" fill="#505050"/><rect x="459" y="27.549999999999997" width="1.8" height="1.6" fill="#444"/><rect x="457" y="29.599999999999998" width="1.8" height="1.6" fill="#505050"/><rect x="461" y="29.599999999999998" width="1.8" height="1.6" fill="#505050"/><rect x="459" y="31.65" width="1.8" height="1.6" fill="#444"/><rect x="457" y="33.699999999999996" width="1.8" height="1.6" fill="#505050"/><rect x="461" y="33.699999999999996" width="1.8" height="1.6" fill="#505050"/><rect x="459" y="35.75" width="1.8" height="1.6" fill="#444"/><rect x="457" y="37.8" width="1.8" height="1.6" fill="#505050"/><rect x="461" y="37.8" width="1.8" height="1.6" fill="#505050"/><rect x="459" y="39.849999999999994" width="1.8" height="1.6" fill="#444"/><rect x="457" y="41.9" width="1.8" height="1.6" fill="#505050"/><rect x="461" y="41.9" width="1.8" height="1.6" fill="#505050"/></svg>
<svg class="a" style="left:0px;top:0px;" width="1" height="1" viewBox="0 0 1 1"><path d="M476.8 25.2V40.2M472 29.3H488" fill="none" stroke="#454545" stroke-width="1.1"/><path d="M479.2 31.8h5v5h-5z" fill="none" stroke="#454545" stroke-width="1.1"/><path d="M508.5 26V40" fill="none" stroke="#454545" stroke-width="1.1"/><path d="M511.5 28.2h14v3.2h-14zM511.5 34.6h8.6v3.2h-8.6z" fill="none" stroke="#454545" stroke-width="1.1"/><path d="M543.4 25.6V40.4" fill="none" stroke="#454545" stroke-width="1.1"/><path d="M536.8 28.2h13.4v3.2h-13.4zM539.8 34.6h7.8v3.2h-7.8z" fill="#1f1f1f" stroke="#454545" stroke-width="1.1"/><path d="M579.2 26V40" fill="none" stroke="#454545" stroke-width="1.1"/><path d="M562.2 28.2h14.6v3.2h-14.6zM567.8 34.6h9v3.2h-9z" fill="none" stroke="#454545" stroke-width="1.1"/><path d="M590 24.8H606" fill="none" stroke="#454545" stroke-width="1.1"/><path d="M593.2 27.2h3.4v14h-3.4zM599.2 27.2h3.4v9h-3.4z" fill="none" stroke="#454545" stroke-width="1.1"/><path d="M618 32.5H632" fill="none" stroke="#454545" stroke-width="1.1"/><path d="M620.6 26.8h3.4v11.6h-3.4zM626.4 28.6h3.4v8h-3.4z" fill="#1f1f1f" stroke="#454545" stroke-width="1.1"/><path d="M644.3 41H659.8" fill="none" stroke="#454545" stroke-width="1.1"/><path d="M647.4 24.5h3.4v14.8h-3.4zM653.4 28.8h3.4v10.5h-3.4z" fill="none" stroke="#454545" stroke-width="1.1"/><path d="M681 26V39.8M697.3 26V39.8" fill="none" stroke="#454545" stroke-width="1.3"/><path d="M689 28.6v8.2M685.4 30.6l7.2 4.2M692.6 30.6l-7.2 4.2" fill="none" stroke="#454545" stroke-width="1.2"/><path d="M707.5 25.6H724M707.5 41H724" fill="none" stroke="#454545" stroke-width="1.2"/><path d="M715.7 27.4V39.2M713 30.2l2.7-2.8 2.7 2.8M713 36.4l2.7 2.8 2.7-2.8" fill="none" stroke="#454545" stroke-width="1.1"/><path d="M734.6 29.6V25h4.6M746 25h4.6v4.6M750.6 35.4V40H746M739.2 40h-4.6V35.4" fill="none" stroke="#454545" stroke-width="1.1"/><path d="M735 25.4l5.4 5.4M750.2 25.4l-5.4 5.4M750.2 39.6l-5.4-5.4M735 39.6l5.4-5.4" fill="none" stroke="#454545" stroke-width="1.1"/><path d="M776 38l3.6 3.8" fill="none" stroke="#454545" stroke-width="1.4"/><circle cx="770.2" cy="32" r="7.8" fill="none" stroke="#454545" stroke-width="1.2"/><path d="M766 28.4h8.4a1.2 1.2 0 0 1 1.2 1.2v4.8a1.2 1.2 0 0 1-1.2 1.2H766a1.2 1.2 0 0 1-1.2-1.2v-4.8a1.2 1.2 0 0 1 1.2-1.2z" fill="none" stroke="#454545" stroke-width="1.1"/><path d="M801.5 26.8h3.8v11.4h-3.8zM809.6 28.6h3.8v8h-3.8z" fill="none" stroke="#454545" stroke-width="1.1"/><path d="M807.4 25.4V40M803.4 24.6v2.2M803.4 38.2v2.2M811.5 26.4v2.2M811.5 36.6v2.2" fill="none" stroke="#454545" stroke-width="1.1"/><path d="M827.8 25.4h11.4v4h-11.4zM829.8 34.2h7.8v4.2h-7.8z" fill="none" stroke="#454545" stroke-width="1.1"/><path d="M825.4 31.8H841.6M825.6 27.4h2.2M839.2 27.4h2.2M827.4 36.2h2.4M837.6 36.2h2.4" fill="none" stroke="#454545" stroke-width="1.1"/></svg>
<div class="a " style="left:497.9px;top:20.5px;width:1px;height:23.0px;background:#3f3f3f;"></div>
<div class="a " style="left:670.1px;top:20.5px;width:1px;height:23.0px;background:#3f3f3f;"></div>
<div class="a " style="left:788.0px;top:20.5px;width:1px;height:23.0px;background:#3f3f3f;"></div>
<div class="a " style="left:852.0px;top:20.5px;width:1px;height:23.0px;background:#3f3f3f;"></div>
<svg class="a" style="left:0px;top:0px;" width="1" height="1" viewBox="0 0 1 1"><rect x="872" y="24.3" width="8.2" height="7" fill="#f2f2f2"/><rect x="861.8" y="34" width="7.8" height="7.6" fill="#f2f2f2"/><rect x="866.8" y="29.4" width="8.4" height="7.6" rx="1.4" fill="#16335e" stroke="#3a96ff" stroke-width="1.5"/></svg>
<svg class="a" style="left:0px;top:0px;" width="1" height="1" viewBox="0 0 1 1"><rect x="894.2" y="28.8" width="7.8" height="7.8" rx="1.2" fill="#16335e" stroke="#3a96ff" stroke-width="1.5" stroke-dasharray="3.2 2"/><rect x="899.3" y="24.3" width="8" height="7.2" fill="#f2f2f2"/><rect x="889" y="34" width="7.8" height="7.6" fill="#f2f2f2"/></svg>
<svg class="a" style="left:0px;top:0px;" width="1" height="1" viewBox="0 0 1 1"><path d="M917.8 34.9H926.2V36.4H917.8Z M917.8 38.4H926.2L922.0 43Z" fill="#f0f0f0"/></svg>
<svg class="a" style="left:0px;top:0px;" width="1" height="1" viewBox="0 0 1 1"><path d="M3.2 71.6h5.6M4.2 71.6v6.2M7.8 71.6v6.2M2 78.2h8.2M6 78.4V85" fill="none" stroke="#e4e4e4" stroke-width="1.5"/><rect x="6.6" y="72" width="1.8" height="6" fill="#e4e4e4"/></svg>
<svg class="a" style="left:0px;top:0px;" width="1" height="1" viewBox="0 0 1 1"><path d="M23.6 73l10 10M33.6 73l-10 10" stroke="#e4e4e4" stroke-width="1.5"/></svg>
<svg class="a" style="left:0px;top:0px;" width="1" height="1" viewBox="0 0 1 1"><path d="M835 77.4h4.2M839.6 73.6v7.6M839.6 74.6h5v5.6h-5M844.6 75.8h-5" fill="none" stroke="#e4e4e4" stroke-width="1.2"/></svg>
<svg class="a" style="left:0px;top:0px;" width="1" height="1" viewBox="0 0 1 1"><path d="M859 72.6l10 10M869 72.6l-10 10" stroke="#e4e4e4" stroke-width="1.5"/></svg>
<svg class="a" style="left:0px;top:0px;" width="1" height="1" viewBox="0 0 1 1"><path d="M1632 105.2l10 10M1642 105.2l-10 10" stroke="#e4e4e4" stroke-width="1.8"/></svg>
<svg class="a" style="left:0px;top:0px;" width="1" height="1" viewBox="0 0 1 1"><path d="M1618 77.2h10l-5 5z" fill="#e4e4e4"/></svg>
<svg class="a" style="left:0px;top:0px;" width="1" height="1" viewBox="0 0 1 1"><path d="M1649.60 77.30L1652.10 77.30" stroke="#e4e4e4" stroke-width="2.5"/><path d="M1648.55 79.85L1650.31 81.61" stroke="#e4e4e4" stroke-width="2.5"/><path d="M1646.00 80.90L1646.00 83.40" stroke="#e4e4e4" stroke-width="2.5"/><path d="M1643.45 79.85L1641.69 81.61" stroke="#e4e4e4" stroke-width="2.5"/><path d="M1642.40 77.30L1639.90 77.30" stroke="#e4e4e4" stroke-width="2.5"/><path d="M1643.45 74.75L1641.69 72.99" stroke="#e4e4e4" stroke-width="2.5"/><path d="M1646.00 73.70L1646.00 71.20" stroke="#e4e4e4" stroke-width="2.5"/><path d="M1648.55 74.75L1650.31 72.99" stroke="#e4e4e4" stroke-width="2.5"/><circle cx="1646" cy="77.3" r="3.3" fill="none" stroke="#e4e4e4" stroke-width="2.2"/></svg>
<svg class="a" style="left:0px;top:0px;" width="1" height="1" viewBox="0 0 1 1"><rect x="1680" y="100.4" width="10.6" height="13" fill="#2a2a2a" stroke="#c8c8c8" stroke-width="1.2"/><path d="M1680 102.6h10.6" stroke="#c8c8c8" stroke-width="1.6"/><path d="M1682.4 105.6h1.4M1685 105.6h3.8M1682.4 108.2h1.4M1685 108.2h3.8M1682.4 110.8h1.4M1685 110.8h3.8" stroke="#d9b77a" stroke-width="1.2"/><path d="M1683 108.4v11l-2.4 0-5.2-4-2.4 2-1.4-.8v-5.4l1.4-.8 2.4 2 5.2-4zM1680.6 111.6l-3 2.3 3 2.3zM1673 112.6v2.6l1.5-1.3z" fill="#9a6be8" fill-rule="evenodd" stroke="#1f1f1f" stroke-width="0.5"/></svg>
<div class="a " style="left:1700px;top:96.5px;width:1px;height:23px;background:#3f3f3f;"></div>
<svg class="a" style="left:0px;top:0px;" width="1" height="1" viewBox="0 0 1 1"><path d="M1709.6 98h6.4l-2.4 2.8v3l-1.6-1v-2z" fill="#3a96ff"/><circle cx="1720.4" cy="109.6" r="6.2" fill="#262626" stroke="#d8d8d8" stroke-width="1.4"/><path d="M1720.4 105.4v4.4h3.8" fill="none" stroke="#d8d8d8" stroke-width="1.3"/></svg>
<svg class="a" style="left:0px;top:0px;" width="1" height="1" viewBox="0 0 1 1"><path d="M1737 106.8h7.4l-3.7 4.2z" fill="#d8d8d8"/></svg>
<svg class="a" style="left:0px;top:0px;" width="1" height="1" viewBox="0 0 1 1"><path d="M1757.6 103.4l-4 3.4h15.4M1764.8 115.4l4-3.4h-15.4" fill="none" stroke="#d8d8d8" stroke-width="1.4" stroke-linejoin="round"/></svg>
<svg class="a" style="left:0px;top:0px;" width="1" height="1" viewBox="0 0 1 1"><path d="M1782.4 101.8v-1.6h15v14h-1.8" fill="none" stroke="#8e8e8e" stroke-width="1.3"/><rect x="1779.6" y="102.6" width="15.6" height="14.6" rx="1.4" fill="#2b2b2b" stroke="#d8d8d8" stroke-width="1.4"/><path d="M1783.4 109.8h8" stroke="#d8d8d8" stroke-width="1.5"/></svg>
<svg class="a" style="left:0px;top:0px;" width="1" height="1" viewBox="0 0 1 1"><rect x="1812.4" y="100.8" width="10.6" height="12" rx="1.2" fill="#3a3f36" stroke="#8e8e8e" stroke-width="1.3"/><rect x="1807.2" y="103.6" width="10" height="10.6" rx="1.2" fill="#2b2b2b" stroke="#d8d8d8" stroke-width="1.3"/><rect x="1811" y="106.8" width="8.6" height="10.6" rx="1.2" fill="#2f332c" stroke="#d8d8d8" stroke-width="1.3"/></svg>
<div class="a " style="left:1833.2px;top:96.5px;width:1px;height:23px;background:#3f3f3f;"></div>
<div class="a " style="left:1840px;top:95px;width:27px;height:26.8px;background:#2a2a2a;border:1.5px solid #6a5be2;"></div>
<svg class="a" style="left:0px;top:0px;" width="1" height="1" viewBox="0 0 1 1"><circle cx="1845.8" cy="101.4" r="1.6" fill="none" stroke="#d8d8d8" stroke-width="1.2"/><path d="M1845.8 103v3.8h4.4M1852.4 108.8v5h4" fill="none" stroke="#d8d8d8" stroke-width="1.2"/><rect x="1850.4" y="104.8" width="3.8" height="3.8" fill="none" stroke="#d8d8d8" stroke-width="1.2"/><rect x="1856.4" y="111.2" width="5" height="5" fill="none" stroke="#d8d8d8" stroke-width="1.3"/></svg>
<svg class="a" style="left:0px;top:0px;" width="1" height="1" viewBox="0 0 1 1"><path d="M1870 106.8h7.4l-3.7 4.2z" fill="#d8d8d8"/></svg>
<div class="a " style="left:1885px;top:96.5px;width:1px;height:23px;background:#3f3f3f;"></div>
<svg class="a" style="left:0px;top:0px;" width="1" height="1" viewBox="0 0 1 1"><path d="M1894.6 118.4l8.4-9.6" stroke="#d8d8d8" stroke-width="2.4" stroke-linecap="round"/><circle cx="1906" cy="104" r="5" fill="none" stroke="#d8d8d8" stroke-width="2"/></svg>
<svg class="a" style="left:0px;top:0px;" width="1" height="1" viewBox="0 0 1 1"><path d="M1690 175h-6.6v-15h16.4v5.6" fill="none" stroke="#9d9d9d" stroke-width="1.4" stroke-linejoin="round"/><path d="M1683.4 163.4h16.4" stroke="#9d9d9d" stroke-width="1.4"/><path d="M1700.2 166.4v9.8l-2.6 -0.0l-5.6 -4.2l-2.6 2.2l-1.6 -0.9v-4.2l1.6 -0.9l2.6 2.2l5.6 -4.2zM1697.6 169.20000000000002l-3 2.1l3 2.1zM1689.3999999999999 170.0v2.6l1.5 -1.3z" fill="#9a6be8" fill-rule="evenodd"/></svg>
<svg class="a" style="left:0px;top:0px;" width="1" height="1" viewBox="0 0 1 1"><path d="M1685.3 187.1V195.3H1677.1Z" fill="#d2d2d2"/></svg>
<div class="a " style="left:1705.4px;top:184.6px;width:18.2px;height:14.8px;background:#262626;border:1.4px solid #9d9d9d;border-radius:1.5px;"></div>
<div class="a t" style="left:1707.6px;top:183.4px;font-size:11.5px;line-height:17px;font-weight:700;color:#6cc98a;letter-spacing:-0.3px;"><span>C#</span></div>
<svg class="a" style="left:0px;top:0px;" width="1" height="1" viewBox="0 0 1 1"><path d="M1707.8 211.1V219.3H1699.6Z" fill="#d2d2d2"/></svg>
<svg class="a" style="left:0px;top:0px;" width="1" height="1" viewBox="0 0 1 1"><path d="M1728.7 209.6h6.2l1.6 1.8h9v10.6H1728.7z" fill="#a8946a" stroke="#eec888" stroke-width="1.3" stroke-linejoin="round"/><path d="M1728.7 212.2h7" stroke="#eec888" stroke-width="1"/></svg>
<svg class="a" style="left:0px;top:0px;" width="1" height="1" viewBox="0 0 1 1"><path d="M1736.6 224.8l-5-4.6" stroke="#1f1f1f" stroke-width="5" stroke-linecap="round"/><circle cx="1730.2" cy="219.6" r="3.6" fill="#1f1f1f"/><path d="M1736.6 224.8l-4.6-4.2" stroke="#e6e6e6" stroke-width="2.2" stroke-linecap="round"/><path d="M1732.4 217.4a3 3 0 1 0 0.6 4.2l-2.6-0.6-0.6-2.2z" fill="#e6e6e6"/></svg>
<svg class="a" style="left:0px;top:0px;" width="1" height="1" viewBox="0 0 1 1"><path d="M1730.2 235.1V243.3H1722Z" fill="#d2d2d2"/></svg>
<svg class="a" style="left:0px;top:0px;" width="1" height="1" viewBox="0 0 1 1"><path d="M1750.9 233.6h6.2l1.6 1.8h9v10.6H1750.9z" fill="#a8946a" stroke="#eec888" stroke-width="1.3" stroke-linejoin="round"/><path d="M1750.9 236.2h7" stroke="#eec888" stroke-width="1"/></svg>
<svg class="a" style="left:0px;top:0px;" width="1" height="1" viewBox="0 0 1 1"><path d="M1779.8 257.5v10c0 1.5 2.2 2.5 5.2 2.5s5.2-1 5.2-2.5v-10" fill="#1d2a33" stroke="#4aa9e4" stroke-width="1.4"/><ellipse cx="1785.0" cy="257.5" rx="5.2" ry="2.3" fill="#1d2a33" stroke="#4aa9e4" stroke-width="1.4"/><path d="M1770.6 264.3h10.4v10.4H1770.6z" fill="#1f1f1f"/><path d="M1772.0 267.7l3.2-3v2.2h3M1775.1999999999998 266.3v4.4c0 1.2 .6 1.8 1.8 1.8h3.6l-2.4-2.2M1780.6 272.5l-2.4 2" fill="none" stroke="#ecc66c" stroke-width="1.8" stroke-linejoin="round"/></svg>
<svg class="a" style="left:0px;top:0px;" width="1" height="1" viewBox="0 0 1 1"><path d="M1779.8 281.5v10c0 1.5 2.2 2.5 5.2 2.5s5.2-1 5.2-2.5v-10" fill="#1d2a33" stroke="#4aa9e4" stroke-width="1.4"/><ellipse cx="1785.0" cy="281.5" rx="5.2" ry="2.3" fill="#1d2a33" stroke="#4aa9e4" stroke-width="1.4"/><path d="M1770.6 288.3h10.4v10.4H1770.6z" fill="#1f1f1f"/><path d="M1772.0 291.7l3.2-3v2.2h3M1775.1999999999998 290.3v4.4c0 1.2 .6 1.8 1.8 1.8h3.6l-2.4-2.2M1780.6 296.5l-2.4 2" fill="none" stroke="#ecc66c" stroke-width="1.8" stroke-linejoin="round"/></svg>
<svg class="a" style="left:0px;top:0px;" width="1" height="1" viewBox="0 0 1 1"><path d="M1779.8 305.5v10c0 1.5 2.2 2.5 5.2 2.5s5.2-1 5.2-2.5v-10" fill="#1d2a33" stroke="#4aa9e4" stroke-width="1.4"/><ellipse cx="1785.0" cy="305.5" rx="5.2" ry="2.3" fill="#1d2a33" stroke="#4aa9e4" stroke-width="1.4"/><path d="M1770.6 312.3h10.4v10.4H1770.6z" fill="#1f1f1f"/><path d="M1772.0 315.7l3.2-3v2.2h3M1775.1999999999998 314.3v4.4c0 1.2 .6 1.8 1.8 1.8h3.6l-2.4-2.2M1780.6 320.5l-2.4 2" fill="none" stroke="#ecc66c" stroke-width="1.8" stroke-linejoin="round"/></svg>
<svg class="a" style="left:0px;top:0px;" width="1" height="1" viewBox="0 0 1 1"><path d="M1779.8 329.5v10c0 1.5 2.2 2.5 5.2 2.5s5.2-1 5.2-2.5v-10" fill="#1d2a33" stroke="#4aa9e4" stroke-width="1.4"/><ellipse cx="1785.0" cy="329.5" rx="5.2" ry="2.3" fill="#1d2a33" stroke="#4aa9e4" stroke-width="1.4"/><path d="M1770.6 336.3h10.4v10.4H1770.6z" fill="#1f1f1f"/><path d="M1772.0 339.7l3.2-3v2.2h3M1775.1999999999998 338.3v4.4c0 1.2 .6 1.8 1.8 1.8h3.6l-2.4-2.2M1780.6 344.5l-2.4 2" fill="none" stroke="#ecc66c" stroke-width="1.8" stroke-linejoin="round"/></svg>
<svg class="a" style="left:0px;top:0px;" width="1" height="1" viewBox="0 0 1 1"><path d="M1779.8 353.5v10c0 1.5 2.2 2.5 5.2 2.5s5.2-1 5.2-2.5v-10" fill="#1d2a33" stroke="#4aa9e4" stroke-width="1.4"/><ellipse cx="1785.0" cy="353.5" rx="5.2" ry="2.3" fill="#1d2a33" stroke="#4aa9e4" stroke-width="1.4"/><path d="M1770.6 360.3h10.4v10.4H1770.6z" fill="#1f1f1f"/><path d="M1772.0 363.7l3.2-3v2.2h3M1775.1999999999998 362.3v4.4c0 1.2 .6 1.8 1.8 1.8h3.6l-2.4-2.2M1780.6 368.5l-2.4 2" fill="none" stroke="#ecc66c" stroke-width="1.8" stroke-linejoin="round"/></svg>
<svg class="a" style="left:0px;top:0px;" width="1" height="1" viewBox="0 0 1 1"><path d="M1779.8 377.5v10c0 1.5 2.2 2.5 5.2 2.5s5.2-1 5.2-2.5v-10" fill="#1d2a33" stroke="#4aa9e4" stroke-width="1.4"/><ellipse cx="1785.0" cy="377.5" rx="5.2" ry="2.3" fill="#1d2a33" stroke="#4aa9e4" stroke-width="1.4"/><path d="M1770.6 384.3h10.4v10.4H1770.6z" fill="#1f1f1f"/><path d="M1772.0 387.7l3.2-3v2.2h3M1775.1999999999998 386.3v4.4c0 1.2 .6 1.8 1.8 1.8h3.6l-2.4-2.2M1780.6 392.5l-2.4 2" fill="none" stroke="#ecc66c" stroke-width="1.8" stroke-linejoin="round"/></svg>
<svg class="a" style="left:0px;top:0px;" width="1" height="1" viewBox="0 0 1 1"><path d="M1700.8 402.0V412.4L1706.2 407.2Z" fill="none" stroke="#bdbdbd" stroke-width="1.3" stroke-linejoin="miter"/></svg>
<svg class="a" style="left:0px;top:0px;" width="1" height="1" viewBox="0 0 1 1"><rect x="1740" y="401.4" width="6.4" height="6.2" fill="#2a2a2a" stroke="#a5a5a5" stroke-width="1.2"/><rect x="1729.8" y="401.8" width="5" height="4.6" fill="none" stroke="#c4c4c4" stroke-width="1.3"/><rect x="1727" y="408.4" width="4.2" height="3.6" fill="none" stroke="#c4c4c4" stroke-width="1.3"/><rect x="1737.4" y="405.4" width="6.4" height="6.8" fill="#2a2a2a" stroke="#c4c4c4" stroke-width="1.3"/><path d="M1731.4 410.2h6M1732.4 406.6v3.4" stroke="#c4c4c4" stroke-width="1.3"/></svg>
<svg class="a" style="left:0px;top:0px;" width="1" height="1" viewBox="0 0 1 1"><path d="M1700.8 426.2V436.59999999999997L1706.2 431.4Z" fill="none" stroke="#bdbdbd" stroke-width="1.3" stroke-linejoin="miter"/></svg>
<div class="a t" style="left:1726.6px;top:422.2px;font-size:15px;line-height:18px;font-weight:700;color:#62c57e;letter-spacing:-0.3px;"><span>C#</span></div>
<svg class="a" style="left:0px;top:0px;" width="1" height="1" viewBox="0 0 1 1"><path d="M1708.0 451.1V459.3H1699.8Z" fill="#d2d2d2"/></svg>
<svg class="a" style="left:0px;top:0px;" width="1" height="1" viewBox="0 0 1 1"><rect x="1727.7" y="448.2" width="16.8" height="14.6" rx="1.3" fill="#2a2a2a" stroke="#a9a9a9" stroke-width="1.4"/><path d="M1727.7 451.59999999999997h16.8" stroke="#a9a9a9" stroke-width="1.5"/><rect x="1730.4" y="456.0" width="5" height="4" fill="#3b2f86" stroke="#8a6be8" stroke-width="1.1"/><rect x="1737.4" y="454.0" width="4.2" height="4" fill="#3b2f86" stroke="#8a6be8" stroke-width="1.1"/></svg>
<svg class="a" style="left:0px;top:0px;" width="1" height="1" viewBox="0 0 1 1"><path d="M1723.1999999999998 473.8V484.2L1728.6 479Z" fill="none" stroke="#bdbdbd" stroke-width="1.3" stroke-linejoin="miter"/></svg>
<div class="a t" style="left:1750.6px;top:470.2px;font-size:15px;line-height:18px;font-weight:700;color:#62c57e;letter-spacing:-0.3px;"><span>C#</span></div>
<svg class="a" style="left:0px;top:0px;" width="1" height="1" viewBox="0 0 1 1"><path d="M1756.6 499.4v-3h6.2l2.8 2.8v8.6h-3" fill="none" stroke="#bdbdbd" stroke-width="1.3" stroke-linejoin="round"/><path d="M1752.8 499.6h5.8l3 3v10.4h-8.8z" fill="#2a2a2a" stroke="#c6c6c6" stroke-width="1.3" stroke-linejoin="round"/><path d="M1758.4 499.8v3.2h3.2" fill="none" stroke="#c6c6c6" stroke-width="1.1"/></svg>
<svg class="a" style="left:0px;top:0px;" width="1" height="1" viewBox="0 0 1 1"><path d="M1708.0 523.1V531.3H1699.8Z" fill="#d2d2d2"/></svg>
<svg class="a" style="left:0px;top:0px;" width="1" height="1" viewBox="0 0 1 1"><rect x="1727.7" y="520.1999999999999" width="16.8" height="14.6" rx="1.3" fill="#2a2a2a" stroke="#a9a9a9" stroke-width="1.4"/><path d="M1727.7 523.6h16.8" stroke="#a9a9a9" stroke-width="1.5"/><rect x="1730.4" y="528.0" width="5" height="4" fill="#3b2f86" stroke="#8a6be8" stroke-width="1.1"/><rect x="1737.4" y="526.0" width="4.2" height="4" fill="#3b2f86" stroke="#8a6be8" stroke-width="1.1"/></svg>
<svg class="a" style="left:0px;top:0px;" width="1" height="1" viewBox="0 0 1 1"><path d="M1723.1999999999998 545.8V556.2L1728.6 551Z" fill="none" stroke="#bdbdbd" stroke-width="1.3" stroke-linejoin="miter"/></svg>
<div class="a t" style="left:1750.6px;top:542.1999999999999px;font-size:15px;line-height:18px;font-weight:700;color:#62c57e;letter-spacing:-0.3px;"><span>C#</span></div>
<svg class="a" style="left:0px;top:0px;" width="1" height="1" viewBox="0 0 1 1"><path d="M1756.6 571.4v-3h6.2l2.8 2.8v8.6h-3" fill="none" stroke="#bdbdbd" stroke-width="1.3" stroke-linejoin="round"/><path d="M1752.8 571.6h5.8l3 3v10.4h-8.8z" fill="#2a2a2a" stroke="#c6c6c6" stroke-width="1.3" stroke-linejoin="round"/><path d="M1758.4 571.8v3.2h3.2" fill="none" stroke="#c6c6c6" stroke-width="1.1"/></svg>
<svg class="a" style="left:0px;top:0px;" width="1" height="1" viewBox="0 0 1 1"><path d="M1700.8 594.1999999999999V604.6L1706.2 599.4Z" fill="none" stroke="#bdbdbd" stroke-width="1.3" stroke-linejoin="miter"/></svg>
<div class="a t" style="left:1726.6px;top:590.1999999999999px;font-size:15px;line-height:18px;font-weight:700;color:#62c57e;letter-spacing:-0.3px;"><span>C#</span></div>
<svg class="a" style="left:0px;top:0px;" width="1" height="1" viewBox="0 0 1 1"><path d="M1708.0 619.1V627.3H1699.8Z" fill="#d2d2d2"/></svg>
<svg class="a" style="left:0px;top:0px;" width="1" height="1" viewBox="0 0 1 1"><rect x="1727.7" y="616.1999999999999" width="16.8" height="14.6" rx="1.3" fill="#2a2a2a" stroke="#a9a9a9" stroke-width="1.4"/><path d="M1727.7 619.6h16.8" stroke="#a9a9a9" stroke-width="1.5"/><rect x="1730.4" y="624.0" width="5" height="4" fill="#3b2f86" stroke="#8a6be8" stroke-width="1.1"/><rect x="1737.4" y="622.0" width="4.2" height="4" fill="#3b2f86" stroke="#8a6be8" stroke-width="1.1"/></svg>
<svg class="a" style="left:0px;top:0px;" width="1" height="1" viewBox="0 0 1 1"><path d="M1723.1999999999998 641.8V652.2L1728.6 647Z" fill="none" stroke="#bdbdbd" stroke-width="1.3" stroke-linejoin="miter"/></svg>
<div class="a t" style="left:1750.6px;top:638.1999999999999px;font-size:15px;line-height:18px;font-weight:700;color:#62c57e;letter-spacing:-0.3px;"><span>C#</span></div>
<svg class="a" style="left:0px;top:0px;" width="1" height="1" viewBox="0 0 1 1"><path d="M1756.6 667.4v-3h6.2l2.8 2.8v8.6h-3" fill="none" stroke="#bdbdbd" stroke-width="1.3" stroke-linejoin="round"/><path d="M1752.8 667.6h5.8l3 3v10.4h-8.8z" fill="#2a2a2a" stroke="#c6c6c6" stroke-width="1.3" stroke-linejoin="round"/><path d="M1758.4 667.8v3.2h3.2" fill="none" stroke="#c6c6c6" stroke-width="1.1"/></svg>
<svg class="a" style="left:0px;top:0px;" width="1" height="1" viewBox="0 0 1 1"><path d="M1700.8 690.1999999999999V700.6L1706.2 695.4Z" fill="none" stroke="#bdbdbd" stroke-width="1.3" stroke-linejoin="miter"/></svg>
<div class="a t" style="left:1726.6px;top:686.1999999999999px;font-size:15px;line-height:18px;font-weight:700;color:#62c57e;letter-spacing:-0.3px;"><span>C#</span></div>
<div class="a " style="left:1666.8px;top:854px;width:29px;height:28px;background:#252525;border:1.5px solid #5a4de0;"></div>
<svg class="a" style="left:0px;top:0px;" width="1" height="1" viewBox="0 0 1 1"><rect x="1672.6" y="860" width="5.2" height="5.2" fill="#e2e2e2"/><path d="M1673.8 862.6h2.8M1675.2 861.2v2.8" stroke="#252525" stroke-width="1"/><rect x="1672.6" y="870.6" width="5.2" height="5.2" fill="#e2e2e2"/><path d="M1673.8 873.2h2.8M1675.2 871.8000000000001v2.8" stroke="#252525" stroke-width="1"/><path d="M1680 860.4h5.6M1687 860.4h0" stroke="#e2e2e2" stroke-width="1.1"/><path d="M1680 862.8h5.6M1687 862.8h3" stroke="#e2e2e2" stroke-width="1.1"/><path d="M1680 865.2h5.6M1687 865.2h3" stroke="#e2e2e2" stroke-width="1.1"/><path d="M1680 867.6h5.6M1687 867.6h3" stroke="#e2e2e2" stroke-width="1.1"/><path d="M1680 870h5.6M1687 870h3" stroke="#e2e2e2" stroke-width="1.1"/><path d="M1680 872.6h5.6M1687 872.6h3" stroke="#e2e2e2" stroke-width="1.1"/><path d="M1680 875.2h5.6M1687 875.2h3" stroke="#e2e2e2" stroke-width="1.1"/></svg>
<svg class="a" style="left:0px;top:0px;" width="1" height="1" viewBox="0 0 1 1"><rect x="1700.6" y="858.6" width="11.6" height="9.4" fill="#8f8f8f" stroke="#d8d8d8" stroke-width="1"/><rect x="1700.6" y="868.6" width="10" height="9" fill="#8f8f8f"/><path d="M1712 861.6h4.2a2 2 0 0 1 2 2v4" fill="none" stroke="#d8d8d8" stroke-width="1.2"/><path d="M1714.6 863.4v9.6" stroke="#3da0ee" stroke-width="3.4"/><path d="M1710.6 871.6l4 4.6 4.4-4.6" fill="#3da0ee" stroke="#d8e8f6" stroke-width="0.9"/><path d="M1714.6 864.6v7.6" stroke="#16365a" stroke-width="1.2"/></svg>
<div class="a t" style="left:1703px;top:856.4px;font-size:10.5px;line-height:13px;font-weight:700;color:#3a3a3a;"><span>A</span></div>
<div class="a t" style="left:1701.4px;top:866.4px;font-size:11px;line-height:13px;font-weight:700;color:#e8e8e8;"><span>Z</span></div>
<div class="a " style="left:1728.4px;top:857px;width:1px;height:24px;background:#3c3c3c;"></div>
<div class="a " style="left:1731px;top:854px;width:29px;height:28px;background:#252525;border:1.5px solid #5a4de0;"></div>
<svg class="a" style="left:0px;top:0px;" width="1" height="1" viewBox="0 0 1 1"><path d="M1737.4 861v-2h10.4l4.6 4.6v13.4h-12" fill="none" stroke="#e2e2e2" stroke-width="1.3" stroke-linejoin="round"/><path d="M1747.6 859.2v4.6h4.6" fill="none" stroke="#e2e2e2" stroke-width="1.1"/><path d="M1736.4 863.2a3.8 3.8 0 0 0 1.6 6.8v6.8h3v-6.8a3.8 3.8 0 0 0 1.6-6.8v3.6h-1.4l-1.6 .8-1.6-.8h-1.6z" fill="#e2e2e2" stroke="#252525" stroke-width="0.5"/></svg>
<svg class="a" style="left:0px;top:0px;" width="1" height="1" viewBox="0 0 1 1"><path d="M1772.6 858.6h10.2l-4.4 6.2h4.8l-14.4 13 3.6-9.2h-5.4z" fill="#f4c088" stroke="#f6f6f6" stroke-width="1.5" stroke-linejoin="round" paint-order="stroke"/></svg>
<div class="a " style="left:1792px;top:857px;width:1px;height:24px;background:#3c3c3c;"></div>
<svg class="a" style="left:0px;top:0px;" width="1" height="1" viewBox="0 0 1 1"><path d="M1801 875.8l9.6-8.6" stroke="#8b8b8b" stroke-width="4.8" stroke-linecap="round"/><circle cx="1813" cy="864.8" r="5.8" fill="#8b8b8b"/><path d="M1813.4 858.4l1 5.4 5.4 1.4" fill="none" stroke="#2a2a2a" stroke-width="0.1"/><path d="M1812.6 859l0.4 5 4.8 1.2 2-2.6-3-4z" fill="#777"/></svg>
<div class="a " style="left:1668px;top:891.2px;width:11px;height:10.6px;border:1.3px solid #e8e8e8;"></div>
<div class="a " style="left:1670.4px;top:895.8px;width:6.2px;height:1.4px;background:#e8e8e8;"></div>
</body></html>
